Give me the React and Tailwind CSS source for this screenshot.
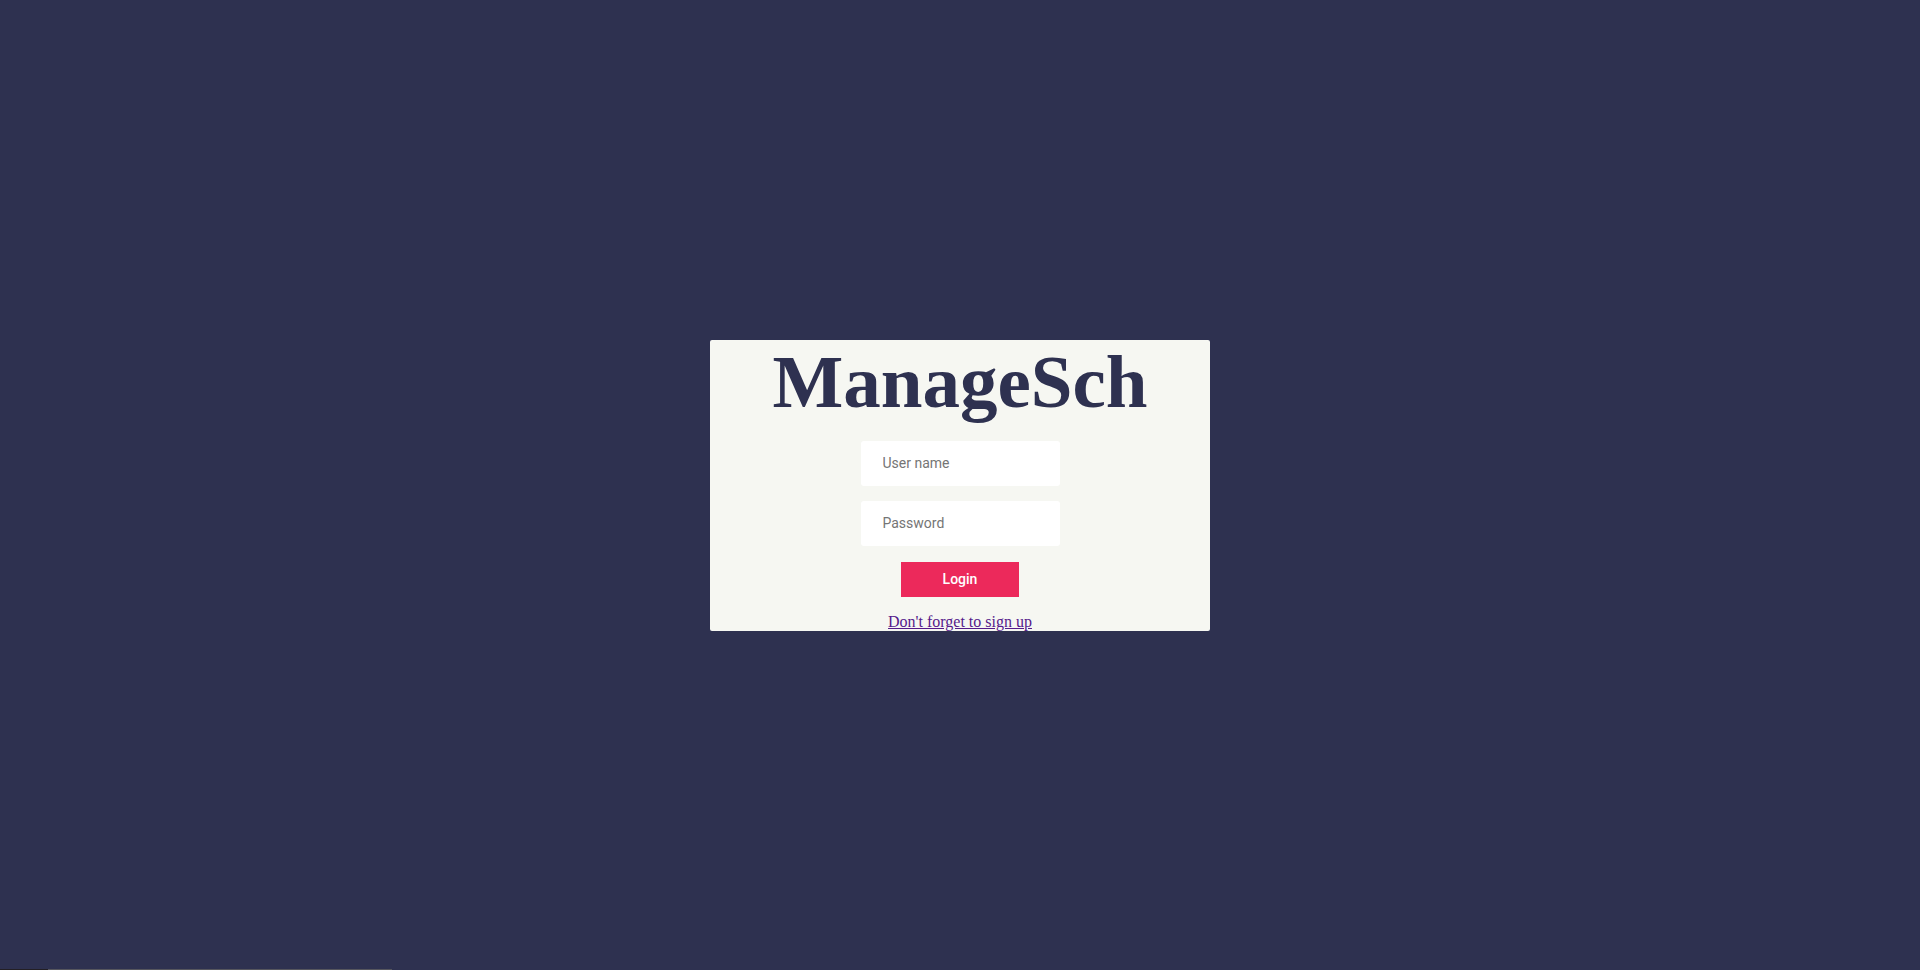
export default function App() {
  return (
    <div className="relative min-h-screen w-full bg-[#2e3150] flex items-center justify-center">
      <div className="w-[500px] h-[291px] bg-[#f6f7f2] rounded-[2px] flex flex-col items-center">
        <h1 className="text-[#2e3150] text-[75px] leading-[84px] font-bold font-['Liberation_Serif',serif]">
          ManageSch
        </h1>
        <form className="mt-[17px] flex flex-col items-center" onSubmit={(e) => e.preventDefault()}>
          <input
            type="text"
            placeholder="User name"
            className="w-[199px] h-[45px] bg-white rounded-[3px] pl-[22px] text-[14px] font-['Roboto',sans-serif] placeholder:text-[#757575] outline-none"
          />
          <input
            type="password"
            placeholder="Password"
            className="mt-[15px] w-[199px] h-[45px] bg-white rounded-[3px] pl-[22px] text-[14px] font-['Roboto',sans-serif] placeholder:text-[#757575] outline-none"
          />
          <button
            type="submit"
            className="mt-[16px] w-[118px] h-[35px] bg-[#ec295b] text-white text-[14px] font-medium font-['Roboto',sans-serif]"
          >
            Login
          </button>
        </form>
        <a href="#" className="mt-[16px] text-[16px] leading-[18px] text-[#551a8b] underline font-['Liberation_Serif',serif]">
          Don't forget to sign up
        </a>
      </div>

      {/* bottom strip */}
      <div className="absolute bottom-0 left-0 w-[392px] h-px flex">
        <div className="w-[48px] bg-[#231f24]" />
        <div className="flex-1 bg-[#56565e]" />
      </div>
    </div>
  );
}
